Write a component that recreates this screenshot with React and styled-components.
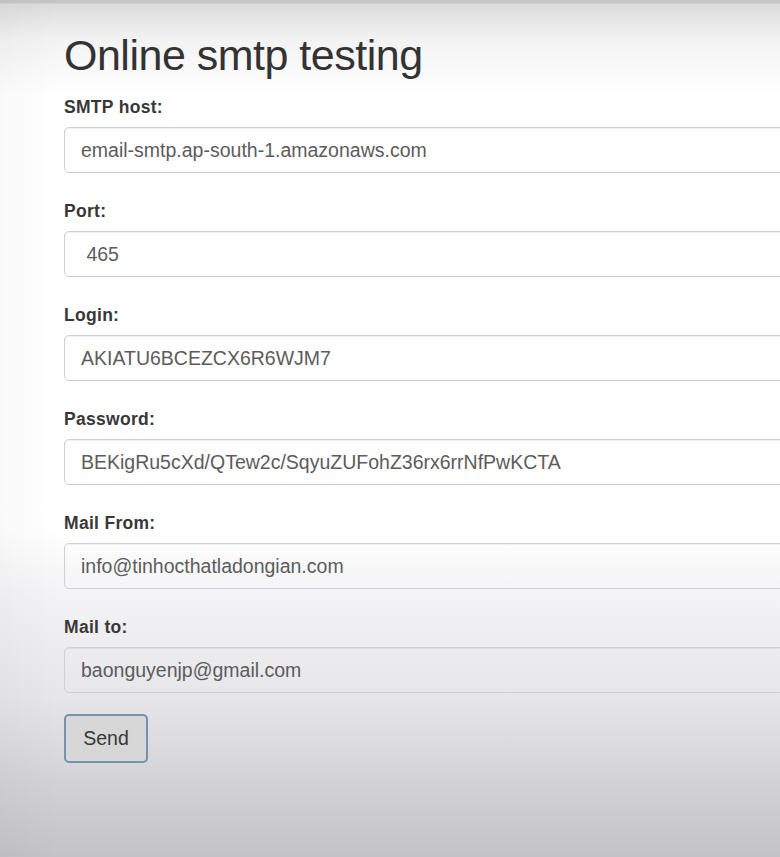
import React from 'react';
import styled, { createGlobalStyle } from 'styled-components';

const FIELDS = [
  { id: 'host', label: 'SMTP host:', value: 'email-smtp.ap-south-1.amazonaws.com' },
  { id: 'port', label: 'Port:', value: ' 465' },
  { id: 'login', label: 'Login:', value: 'AKIATU6BCEZCX6R6WJM7' },
  { id: 'password', label: 'Password:', value: 'BEKigRu5cXd/QTew2c/SqyuZUFohZ36rx6rrNfPwKCTA' },
  { id: 'from', label: 'Mail From:', value: 'info@tinhocthatladongian.com' },
  { id: 'to', label: 'Mail to:', value: 'baonguyenjp@gmail.com' }
];

export default function App() {
  return (
    <>
      <GlobalStyle />
      <Page>
        <Container>
          <Title>Online smtp testing</Title>
          <Fields>
            {FIELDS.map(f => (
              <Field key={f.id}>
                <Label htmlFor={f.id}>{f.label}</Label>
                <Input id={f.id} type="text" defaultValue={f.value} readOnly />
              </Field>
            ))}
          </Fields>
          <SendBtn type="button">Send</SendBtn>
        </Container>
      </Page>
    </>
  );
}

const GlobalStyle = createGlobalStyle`
  html, body {
    margin: 0;
    padding: 0;
    overflow: hidden;
  }
  body {
    font-family: "Liberation Sans", Arial, sans-serif;
  }
  * {
    box-sizing: border-box;
  }
`;

const Page = styled.div`
  min-height: 100vh;
  background:
    linear-gradient(to right, rgba(0, 0, 0, 0.025), rgba(0, 0, 0, 0) 60px),
    linear-gradient(
      to bottom,
      #c6c6c8 0,
      #c6c6c8 3px,
      #dcdcdc 4px,
      #f3f3f3 40px,
      #ffffff 95px,
      #ffffff 530px,
      #f3f2f4 600px,
      #e6e5e7 700px,
      #d3d2d5 780px,
      #c3c2c5 857px
    );
`;

const Container = styled.div`
  padding: 31px 0 0 64px;
`;

const Title = styled.h1`
  margin: 0 0 18px;
  font-size: 43px;
  line-height: 48px;
  font-weight: 400;
  letter-spacing: -0.5px;
  color: #333;
`;

const Fields = styled.div`
  display: flex;
  flex-direction: column;
  gap: 28px;
`;

const Field = styled.div`
  display: flex;
  flex-direction: column;
`;

const Label = styled.label`
  display: block;
  font-size: 17.5px;
  line-height: 20px;
  font-weight: 700;
  letter-spacing: 0.3px;
  color: #383838;
  margin-bottom: 10px;
`;

const Input = styled.input`
  width: 760px;
  height: 46px;
  padding: 0 16px;
  border: 1px solid #d0d0d0;
  border-radius: 5px;
  background: transparent;
  box-shadow: inset 0 1px 1px rgba(0, 0, 0, 0.06);
  font-family: "Liberation Sans", Arial, sans-serif;
  font-size: 19.5px;
  color: #5c5c5c;
  outline: none;
`;

const SendBtn = styled.button`
  margin-top: 21px;
  width: 84px;
  height: 49px;
  padding: 0;
  border: 2px solid #7391b0;
  border-radius: 5px;
  background: #d7d7d8;
  font-family: "Liberation Sans", Arial, sans-serif;
  font-size: 19.5px;
  color: #383838;
  cursor: pointer;
`;
